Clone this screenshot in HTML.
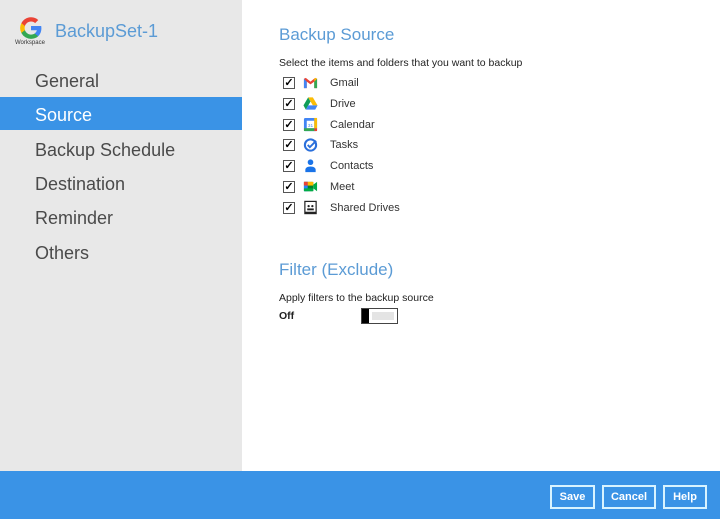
<!DOCTYPE html>
<html><head><style>
body{margin:0;width:720px;height:519px;position:relative;overflow:hidden;background:#fff;font-family:"Liberation Sans",sans-serif;}
.side{position:absolute;left:0;top:0;width:242px;height:471px;background:#e8e8e8;}
.nav{position:absolute;left:35px;font-size:18px;color:#4a4a4a;line-height:34px;}
.sel{position:absolute;left:0;top:97px;width:242px;height:33px;background:#3a93e6;}
.bar{position:absolute;left:0;top:471px;width:720px;height:48px;background:#3a93e6;}
.btn{position:absolute;top:485px;height:20px;border:2px solid #d8f3ff;color:#fff;font-size:11px;font-weight:bold;text-align:center;line-height:20px;box-sizing:content-box;}
.h{position:absolute;left:279px;font-size:17px;color:#5b9bd5;}
.t{position:absolute;left:279px;font-size:10.5px;color:#222;}
.row{position:absolute;left:283px;height:16px;}
.cb{position:absolute;left:0;top:2px;width:10px;height:10px;border:1px solid #555;font-size:11px;line-height:10px;text-align:center;color:#000;font-weight:bold;}
.ic{position:absolute;left:20px;top:0;width:15px;height:15px;}
.lb{position:absolute;left:47px;top:2px;font-size:11px;color:#333;white-space:nowrap;}
</style></head><body>
<div class="side"></div>
<div class="sel"></div>
<svg style="position:absolute;left:18px;top:15px" width="26" height="26" viewBox="0 0 24 24">
<path d="M21.6 12.2c0-.7-.1-1.4-.2-2H12v3.9h5.4a4.6 4.6 0 0 1-2 3v2.5h3.2c1.9-1.7 3-4.3 3-7.4z" fill="#4285F4"/>
<path d="M12 22c2.7 0 5-.9 6.6-2.4l-3.2-2.5c-.9.6-2 1-3.4 1-2.6 0-4.8-1.800-5.6-4.1H3.1v2.6A10 10 0 0 0 12 22z" fill="#34A853"/>
<path d="M6.4 14a6 6 0 0 1 0-3.9V7.5H3.1a10 10 0 0 0 0 9z" fill="#FBBC05"/>
<path d="M12 6c1.5 0 2.8.5 3.8 1.5l2.9-2.9A10 10 0 0 0 3.1 7.5l3.3 2.6C7.2 7.8 9.4 6 12 6z" fill="#EA4335"/>
</svg>
<div style="position:absolute;left:15px;top:40px;font-size:6px;color:#333">Workspace</div>
<div style="position:absolute;left:55px;top:21px;font-size:18px;color:#5b9bd5">BackupSet-1</div>
<div class="nav" style="top:64px">General</div>
<div class="nav" style="top:98px;color:#fff">Source</div>
<div class="nav" style="top:133px">Backup Schedule</div>
<div class="nav" style="top:167px">Destination</div>
<div class="nav" style="top:201px">Reminder</div>
<div class="nav" style="top:236px">Others</div>

<div class="h" style="top:25px">Backup Source</div>
<div class="t" style="top:57px">Select the items and folders that you want to backup</div>

<div class="row" style="top:75px"><div class="cb">✓</div><svg class="ic" viewBox="0 0 16 16"><path d="M1 4v10h3V7l4 3 4-3v7h3V4l-2-1-5 4-5-4z" fill="#EA4335"/><path d="M1 4v10h3V7z" fill="#4285F4"/><path d="M12 7v7h3V4z" fill="#34A853"/><path d="M13 3l2 1-3 3V4z" fill="#FBBC05"/></svg><div class="lb">Gmail</div></div>
<div class="row" style="top:96px"><div class="cb">✓</div><svg class="ic" viewBox="0 0 16 16"><path d="M5.5 1.5h5l5 8.5h-5z" fill="#FBBC05"/><path d="M5.5 1.5 0.5 10l2.5 4.5 5-8.5z" fill="#0F9D58"/><path d="M3 14.5h10l2.5-4.5h-10z" fill="#4285F4"/></svg><div class="lb">Drive</div></div>
<div class="row" style="top:117px"><div class="cb">✓</div><svg class="ic" viewBox="0 0 16 16"><rect x="1" y="1" width="14" height="14" rx="1.5" fill="#4285F4"/><rect x="4" y="4" width="8" height="8" fill="#fff"/><rect x="12" y="12" width="3" height="3" fill="#EA4335"/><rect x="1" y="12" width="11" height="3" fill="#34A853"/><rect x="12" y="1" width="3" height="11" fill="#FBBC05"/><text x="8" y="10.5" font-size="5" text-anchor="middle" fill="#4285F4" font-family="Liberation Sans">31</text></svg><div class="lb">Calendar</div></div>
<div class="row" style="top:137px"><div class="cb">✓</div><svg class="ic" viewBox="0 0 16 16"><circle cx="8" cy="8.5" r="6" fill="none" stroke="#2A6FDB" stroke-width="2.2"/><path d="M5 8.5l2.3 2.3L14 4" fill="none" stroke="#2A6FDB" stroke-width="2"/></svg><div class="lb">Tasks</div></div>
<div class="row" style="top:158px"><div class="cb">✓</div><svg class="ic" viewBox="0 0 16 16"><circle cx="8" cy="4.5" r="3" fill="#1a73e8"/><path d="M2.5 15v-2.5c0-2 2-3.5 5.5-3.5s5.5 1.5 5.5 3.5V15z" fill="#1a73e8"/></svg><div class="lb">Contacts</div></div>
<div class="row" style="top:179px"><div class="cb">✓</div><svg class="ic" viewBox="0 0 16 16"><rect x="1" y="3" width="10" height="10" rx="1" fill="#00832D"/><path d="M1 3h10v4H1z" fill="#FFBA00"/><path d="M1 3h4v10H1z" fill="#2684FC"/><path d="M1 10h10v3H1z" fill="#00AC47"/><path d="M1 3h4v4H1z" fill="#EA4335"/><path d="M11 6l4-3v10l-4-3z" fill="#00AC47"/></svg><div class="lb">Meet</div></div>
<div class="row" style="top:200px"><div class="cb">✓</div><svg class="ic" viewBox="0 0 16 16"><rect x="2" y="1.5" width="12" height="13" fill="#fff" stroke="#222" stroke-width="1.3"/><circle cx="6" cy="6.5" r="1.2" fill="#222"/><circle cx="10" cy="6.5" r="1.2" fill="#222"/><rect x="4.5" y="9" width="7" height="2" fill="#222"/><rect x="2" y="12.5" width="12" height="2" fill="#222"/></svg><div class="lb">Shared Drives</div></div>

<div class="h" style="top:260px">Filter (Exclude)</div>
<div class="t" style="top:292px">Apply filters to the backup source</div>
<div style="position:absolute;left:279px;top:310px;font-size:10.5px;font-weight:bold;color:#222">Off</div>
<div style="position:absolute;left:361px;top:308px;width:35px;height:14px;border:1px solid #444;background:#fff"><div style="position:absolute;left:0;top:0;width:7px;height:14px;background:#000"></div><div style="position:absolute;left:10px;top:3px;width:22px;height:8px;background:#e4e4e4"></div></div>

<div class="bar"></div>
<div class="btn" style="left:550px;width:41px">Save</div>
<div class="btn" style="left:602px;width:50px">Cancel</div>
<div class="btn" style="left:663px;width:40px">Help</div>
</body></html>
